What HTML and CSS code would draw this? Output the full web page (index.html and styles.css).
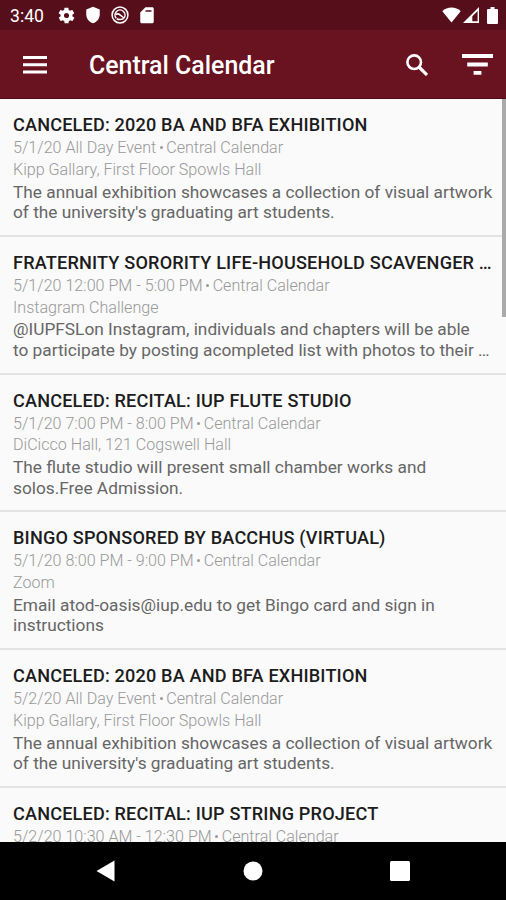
FILE: index.html
```html
<!DOCTYPE html>
<html lang="en">
<head>
    <meta charset="UTF-8">
    <meta name="viewport" content="width=device-width, initial-scale=1.0">
    <title>Central Calendar</title>
    <link rel="stylesheet" href="styles.css">
</head>
<body>

    <div class="status-bar">
        <span class="clock">3:40</span>
        <div class="status-left">
            <svg width="19" height="19" viewBox="0 0 24 24"><path fill-rule="evenodd" d="M19.4 13c0-.3.1-.6.1-1s0-.7-.1-1l2.1-1.6c.2-.2.3-.4.1-.6l-2-3.5c-.1-.2-.4-.3-.6-.2l-2.5 1c-.5-.4-1.1-.7-1.7-1l-.4-2.6c0-.3-.2-.4-.5-.4h-4c-.2 0-.4.2-.5.4l-.4 2.6c-.6.3-1.1.6-1.7 1l-2.5-1c-.2-.1-.5 0-.6.2l-2 3.5c-.1.2-.1.5.1.6L4.6 11c0 .3-.1.6-.1 1s0 .7.1 1l-2.1 1.6c-.2.2-.3.4-.1.6l2 3.5c.1.2.4.3.6.2l2.5-1c.5.4 1.1.7 1.7 1l.4 2.6c0 .3.2.4.5.4h4c.2 0 .4-.2.5-.4l.4-2.6c.6-.3 1.1-.6 1.7-1l2.5 1c.2.1.5 0 .6-.2l2-3.5c.1-.2.1-.5-.1-.6zM12 15.2a3.2 3.2 0 1 1 0-6.4 3.2 3.2 0 0 1 0 6.4z"/></svg>
            <svg width="18" height="18" viewBox="0 0 24 24"><path d="M12 1 3 4.500V11c0 5.600 3.800 10.700 9 12 5.200-1.300 9-6.400 9-12V4.500z"/></svg>
            <svg width="20" height="20" viewBox="0 0 24 24"><g fill="none" stroke="#fff" stroke-width="1.8"><circle cx="12" cy="12" r="9.500"/><path d="M7.500 16a6 6 0 1 1 9 0"/><path d="M7 11.500c2.500-2 4-.5 5.500.8s3 1.200 4 3.700M8 16.500c3 1.500 6 1.200 8.500-.5"/></g></svg>
            <svg width="18" height="18" viewBox="0 0 24 24"><path fill-rule="evenodd" d="M19 1.500h-9L3 8.500V21c0 1.100.9 2 2 2h14c1.100 0 2-.9 2-2V3.500c0-1.100-.9-2-2-2zM10 5.500v2h8v-2z"/></svg>
        </div>
        <div class="status-right">
            <svg width="19" height="16" viewBox="0 0 19 16"><path d="M9.500 15.500.3 4.200C5-.6 14-.6 18.700 4.200z"/></svg>
            <svg width="16" height="16" viewBox="0 0 16 16"><path fill-rule="evenodd" d="M16 0v16H0zM14.600 4 9.300 9.300v5h5.300z"/></svg>
            <svg class="battery" width="11" height="17" viewBox="0 0 11 17"><path d="M3.500 0h4v2H10q1 0 1 1v13q0 1-1 1H1q-1 0-1-1V3q0-1 1-1h2.500z"/></svg>
        </div>
    </div>

    <div class="toolbar">
        <svg class="menu" width="24" height="18" viewBox="0 0 24 18"><path d="M0 0h24v3H0zM0 7.200h24v3H0zM0 14.400h24v3H0z"/></svg>
        <h1>Central Calendar</h1>
        <svg class="search" width="22" height="22" viewBox="0 0 22 22"><g fill="none" stroke="#fff" stroke-width="2.600"><circle cx="8.200" cy="8.200" r="6.800"/><path d="m13 13 8 8" stroke-width="3.200"/></g></svg>
        <svg class="filter" width="31" height="21" viewBox="0 0 31 21"><path d="M0 0h31v4H0zM5.200 8.500h20.600v4H5.200zM11.600 17h7.800v3.700h-7.800z"/></svg>
    </div>

    <div class="events">
        <div class="event">
            <h2>CANCELED: 2020 BA AND BFA EXHIBITION</h2>
            <p class="meta">5/1/20 All Day Event<i></i>Central Calendar</p>
            <p class="meta">Kipp Gallary, First Floor Spowls Hall</p>
            <p class="desc">The annual exhibition showcases a collection of visual artwork<br>of the university's graduating art students.</p>
        </div>
        <div class="event">
            <h2>FRATERNITY SORORITY LIFE-HOUSEHOLD SCAVENGER …</h2>
            <p class="meta">5/1/20 12:00 PM - 5:00 PM<i></i>Central Calendar</p>
            <p class="meta">Instagram Challenge</p>
            <p class="desc">@IUPFSLon Instagram, individuals and chapters will be able<br>to participate by posting acompleted list with photos to their …</p>
        </div>
        <div class="event">
            <h2>CANCELED: RECITAL: IUP FLUTE STUDIO</h2>
            <p class="meta">5/1/20 7:00 PM - 8:00 PM<i></i>Central Calendar</p>
            <p class="meta">DiCicco Hall, 121 Cogswell Hall</p>
            <p class="desc">The flute studio will present small chamber works and<br>solos.Free Admission.</p>
        </div>
        <div class="event">
            <h2>BINGO SPONSORED BY BACCHUS (VIRTUAL)</h2>
            <p class="meta">5/1/20 8:00 PM - 9:00 PM<i></i>Central Calendar</p>
            <p class="meta">Zoom</p>
            <p class="desc">Email atod-oasis@iup.edu to get Bingo card and sign in<br>instructions</p>
        </div>
        <div class="event">
            <h2>CANCELED: 2020 BA AND BFA EXHIBITION</h2>
            <p class="meta">5/2/20 All Day Event<i></i>Central Calendar</p>
            <p class="meta">Kipp Gallary, First Floor Spowls Hall</p>
            <p class="desc">The annual exhibition showcases a collection of visual artwork<br>of the university's graduating art students.</p>
        </div>
        <div class="event">
            <h2>CANCELED: RECITAL: IUP STRING PROJECT</h2>
            <p class="meta">5/2/20 10:30 AM - 12:30 PM<i></i>Central Calendar</p>
        </div>
        <div class="scrollbar"></div>
    </div>

    <div class="nav-bar">
        <svg width="20" height="22" viewBox="0 0 20 22"><path d="M18.500.5v21L.5 11z"/></svg>
        <svg width="20" height="20" viewBox="0 0 20 20"><circle cx="10" cy="10" r="9.500"/></svg>
        <svg width="20" height="20" viewBox="0 0 20 20"><rect width="20" height="20" rx="1.500"/></svg>
    </div>

</body>
</html>
```

FILE: styles.css
```css
body {
    margin: 0;
    height: 900px;
    display: flex;
    flex-direction: column;
    overflow: hidden;
    font-family: Roboto, "Liberation Sans", sans-serif;
    background-color: #fafafa;
}

h1, h2, p {
    margin: 0;
}

svg {
    display: block;
    flex: none;
    fill: #fff;
}

.status-bar {
    box-sizing: border-box;
    height: 30px;
    flex: none;
    display: flex;
    align-items: center;
    padding: 0 8px 0 10px;
    background-color: #560f1a;
    color: #fff;
}

.clock {
    width: 47px;
    padding-top: 2px;
    font-size: 17.6px;
}

.status-left {
    display: flex;
    align-items: center;
    gap: 8px;
}

.status-right {
    display: flex;
    align-items: center;
    gap: 2px;
    margin-left: auto;
}

.battery {
    margin-left: 6px;
}

.toolbar {
    box-sizing: border-box;
    height: 69px;
    flex: none;
    display: flex;
    align-items: center;
    padding: 1px 13px 0 23px;
    background-color: #691220;
    border-bottom: 1px solid #4d0c16;
}

.toolbar h1 {
    flex: 1;
    margin-left: 42px;
    padding-top: 2px;
    font-size: 24.9px;
    font-weight: 500;
    color: #fff;
}

.filter {
    margin-left: 34px;
}

.events {
    position: relative;
    flex: 1;
    min-height: 0;
    overflow: hidden;
}

.event {
    box-sizing: border-box;
    height: 137.8px;
    padding: 14px 0 0 13px;
    border-bottom: 2px solid #e3e3e3;
    white-space: nowrap;
}

.event h2 {
    margin-bottom: 1px;
    font-size: 18.1px;
    line-height: 23px;
    font-weight: 500;
    letter-spacing: 0.18px;
    color: #1c1c1c;
}

.meta {
    font-size: 16.1px;
    line-height: 21.7px;
    font-weight: 300;
    color: #999;
}

.meta i {
    display: inline-block;
    width: 3px;
    height: 3px;
    margin: 0 3.5px 4px;
    border-radius: 50%;
    background-color: #999;
}

.desc {
    margin-top: 1.2px;
    font-size: 17.27px;
    line-height: 20.4px;
    color: #666;
}

/* sits over the list on the right edge */
.scrollbar {
    position: absolute;
    top: 0;
    right: 0;
    width: 4px;
    height: 218px;
    background-color: #aaa;
}

.nav-bar {
    height: 58px;
    flex: none;
    display: flex;
    align-items: center;
    justify-content: center;
    gap: 127px;
    background-color: #000;
}
```
